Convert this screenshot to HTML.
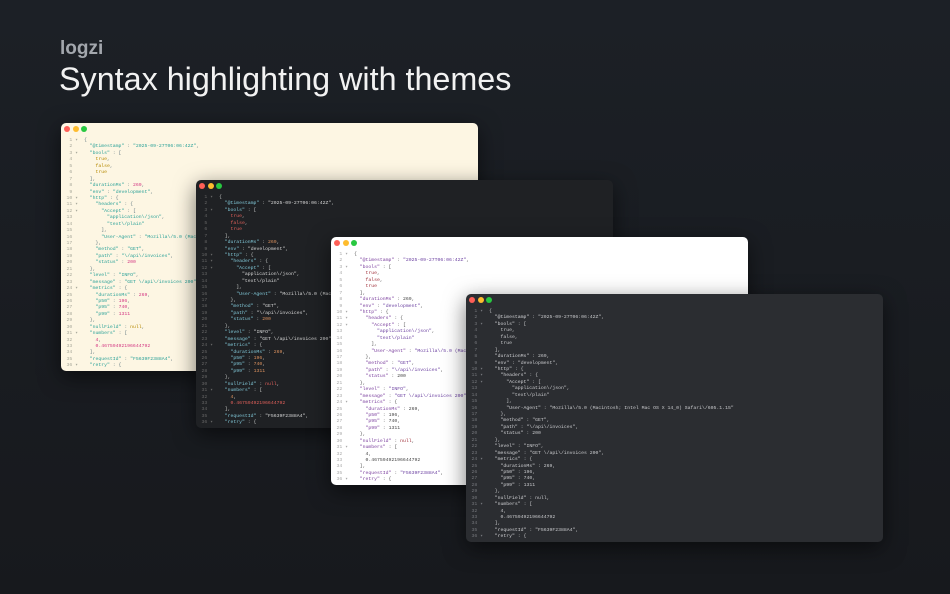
<!DOCTYPE html>
<html><head><meta charset="utf-8"><style>
*{margin:0;padding:0;box-sizing:border-box}
body{width:950px;height:594px;overflow:hidden;background:linear-gradient(180deg,#1c2026 0%,#17191d 100%);font-family:"Liberation Sans",sans-serif;position:relative}
.brand{position:absolute;left:60px;top:38px;color:#a3a7ad;font-size:19px;font-weight:bold}
.title{position:absolute;left:59px;top:61px;color:#f2f2f2;font-size:32.3px;font-weight:normal}
.win{position:absolute;width:417px;height:248px;border-radius:5px;overflow:hidden;box-shadow:0 6px 22px rgba(0,0,0,.55)}
.dot{position:absolute;top:3px;width:6px;height:6px;border-radius:50%}
.d1{left:3px;background:#fe5f57}.d2{left:11.5px;background:#febc2e}.d3{left:20px;background:#28c840}
.code{position:absolute;left:0;top:15px;font-family:"Liberation Mono",monospace;font-size:4.8px;line-height:6.43px;white-space:pre}
.ln{position:absolute;left:0;width:17px;text-align:right}
.tx{position:absolute;left:23px}
.w1{left:61px;top:123px;background:#fdf6e3}
.w1 .ln{color:#a9a99b}.w1 .tx{color:#657b83}.w1 .k{color:#2aa198}.w1 .s{color:#2aa198}.w1 .b{color:#b58900}.w1 .n{color:#d33682}
.w2{left:196px;top:180px;background:#1f2124}
.w2 .ln{color:#666}.w2 .tx{color:#c5c8c6}.w2 .k{color:#81c8d8}.w2 .s{color:#d6d6d6}.w2 .b{color:#e0605a}.w2 .n{color:#de935f}
.w3{left:331px;top:237px;background:#ffffff}
.w3 .ln{color:#aaa}.w3 .tx{color:#555}.w3 .k{color:#7a3e9d}.w3 .s{color:#6a3fa0}.w3 .b{color:#a0303a}.w3 .n{color:#444}
.w4{left:466px;top:294px;background:#2b2d31}
.w4 .ln{color:#75777c}.w4 .tx{color:#c8c9cc}.w4 .k{color:#d0d1d4}.w4 .s{color:#c8c9cc}.w4 .b{color:#c8c9cc}.w4 .n{color:#c8c9cc}
</style></head><body>
<div class="brand">logzi</div>
<div class="title">Syntax highlighting with themes</div>

<div class="win w1"><div class="dot d1"></div><div class="dot d2"></div><div class="dot d3"></div><div class="code"><div class="ln">1 ▾
2  
3 ▾
4  
5  
6  
7  
8  
9  
10 ▾
11 ▾
12 ▾
13  
14  
15  
16  
17  
18  
19  
20  
21  
22  
23  
24 ▾
25  
26  
27  
28  
29  
30  
31 ▾
32  
33  
34  
35  
36 ▾</div><div class="tx">{
  <span class="k">"@timestamp"</span> : <span class="s">"2025-09-27T06:06:42Z"</span>,
  <span class="k">"bools"</span> : [
    <span class="b">true</span>,
    <span class="b">false</span>,
    <span class="b">true</span>
  ],
  <span class="k">"durationMs"</span> : <span class="n">269</span>,
  <span class="k">"env"</span> : <span class="s">"development"</span>,
  <span class="k">"http"</span> : {
    <span class="k">"headers"</span> : {
      <span class="k">"Accept"</span> : [
        <span class="s">"application\/json"</span>,
        <span class="s">"text\/plain"</span>
      ],
      <span class="k">"User-Agent"</span> : <span class="s">"Mozilla\/5.0 (Macintosh; Intel Mac OS X 14_0) Safari\/605.1.15"</span>
    },
    <span class="k">"method"</span> : <span class="s">"GET"</span>,
    <span class="k">"path"</span> : <span class="s">"\/api\/invoices"</span>,
    <span class="k">"status"</span> : <span class="n">200</span>
  },
  <span class="k">"level"</span> : <span class="s">"INFO"</span>,
  <span class="k">"message"</span> : <span class="s">"GET \/api\/invoices 200"</span>,
  <span class="k">"metrics"</span> : {
    <span class="k">"durationMs"</span> : <span class="n">269</span>,
    <span class="k">"p50"</span> : <span class="n">196</span>,
    <span class="k">"p95"</span> : <span class="n">740</span>,
    <span class="k">"p99"</span> : <span class="n">1311</span>
  },
  <span class="k">"nullField"</span> : <span class="b">null</span>,
  <span class="k">"numbers"</span> : [
    <span class="n">4</span>,
    <span class="n">0.46759492196644792</span>
  ],
  <span class="k">"requestId"</span> : <span class="s">"F5639F2388A4"</span>,
  <span class="k">"retry"</span> : {</div></div></div>

<div class="win w2"><div class="dot d1"></div><div class="dot d2"></div><div class="dot d3"></div><div class="code"><div class="ln">1 ▾
2  
3 ▾
4  
5  
6  
7  
8  
9  
10 ▾
11 ▾
12 ▾
13  
14  
15  
16  
17  
18  
19  
20  
21  
22  
23  
24 ▾
25  
26  
27  
28  
29  
30  
31 ▾
32  
33  
34  
35  
36 ▾</div><div class="tx">{
  <span class="k">"@timestamp"</span> : <span class="s">"2025-09-27T06:06:42Z"</span>,
  <span class="k">"bools"</span> : [
    <span class="b">true</span>,
    <span class="b">false</span>,
    <span class="b">true</span>
  ],
  <span class="k">"durationMs"</span> : <span class="n">269</span>,
  <span class="k">"env"</span> : <span class="s">"development"</span>,
  <span class="k">"http"</span> : {
    <span class="k">"headers"</span> : {
      <span class="k">"Accept"</span> : [
        <span class="s">"application\/json"</span>,
        <span class="s">"text\/plain"</span>
      ],
      <span class="k">"User-Agent"</span> : <span class="s">"Mozilla\/5.0 (Macintosh; Intel Mac OS X 14_0) Safari\/605.1.15"</span>
    },
    <span class="k">"method"</span> : <span class="s">"GET"</span>,
    <span class="k">"path"</span> : <span class="s">"\/api\/invoices"</span>,
    <span class="k">"status"</span> : <span class="n">200</span>
  },
  <span class="k">"level"</span> : <span class="s">"INFO"</span>,
  <span class="k">"message"</span> : <span class="s">"GET \/api\/invoices 200"</span>,
  <span class="k">"metrics"</span> : {
    <span class="k">"durationMs"</span> : <span class="n">269</span>,
    <span class="k">"p50"</span> : <span class="n">196</span>,
    <span class="k">"p95"</span> : <span class="n">740</span>,
    <span class="k">"p99"</span> : <span class="n">1311</span>
  },
  <span class="k">"nullField"</span> : <span class="b">null</span>,
  <span class="k">"numbers"</span> : [
    <span class="n">4</span>,
    <span class="b">0.46759492196644792</span>
  ],
  <span class="k">"requestId"</span> : <span class="s">"F5639F2388A4"</span>,
  <span class="k">"retry"</span> : {</div></div></div>

<div class="win w3"><div class="dot d1"></div><div class="dot d2"></div><div class="dot d3"></div><div class="code"><div class="ln">1 ▾
2  
3 ▾
4  
5  
6  
7  
8  
9  
10 ▾
11 ▾
12 ▾
13  
14  
15  
16  
17  
18  
19  
20  
21  
22  
23  
24 ▾
25  
26  
27  
28  
29  
30  
31 ▾
32  
33  
34  
35  
36 ▾</div><div class="tx">{
  <span class="k">"@timestamp"</span> : <span class="s">"2025-09-27T06:06:42Z"</span>,
  <span class="k">"bools"</span> : [
    <span class="b">true</span>,
    <span class="b">false</span>,
    <span class="b">true</span>
  ],
  <span class="k">"durationMs"</span> : <span class="n">269</span>,
  <span class="k">"env"</span> : <span class="s">"development"</span>,
  <span class="k">"http"</span> : {
    <span class="k">"headers"</span> : {
      <span class="k">"Accept"</span> : [
        <span class="s">"application\/json"</span>,
        <span class="s">"text\/plain"</span>
      ],
      <span class="k">"User-Agent"</span> : <span class="s">"Mozilla\/5.0 (Macintosh; Intel Mac OS X 14_0) Safari\/605.1.15"</span>
    },
    <span class="k">"method"</span> : <span class="s">"GET"</span>,
    <span class="k">"path"</span> : <span class="s">"\/api\/invoices"</span>,
    <span class="k">"status"</span> : <span class="n">200</span>
  },
  <span class="k">"level"</span> : <span class="s">"INFO"</span>,
  <span class="k">"message"</span> : <span class="s">"GET \/api\/invoices 200"</span>,
  <span class="k">"metrics"</span> : {
    <span class="k">"durationMs"</span> : <span class="n">269</span>,
    <span class="k">"p50"</span> : <span class="n">196</span>,
    <span class="k">"p95"</span> : <span class="n">740</span>,
    <span class="k">"p99"</span> : <span class="n">1311</span>
  },
  <span class="k">"nullField"</span> : <span class="b">null</span>,
  <span class="k">"numbers"</span> : [
    <span class="n">4</span>,
    <span class="n">0.46759492196644792</span>
  ],
  <span class="k">"requestId"</span> : <span class="s">"F5639F2388A4"</span>,
  <span class="k">"retry"</span> : {</div></div></div>

<div class="win w4"><div class="dot d1"></div><div class="dot d2"></div><div class="dot d3"></div><div class="code"><div class="ln">1 ▾
2  
3 ▾
4  
5  
6  
7  
8  
9  
10 ▾
11 ▾
12 ▾
13  
14  
15  
16  
17  
18  
19  
20  
21  
22  
23  
24 ▾
25  
26  
27  
28  
29  
30  
31 ▾
32  
33  
34  
35  
36 ▾</div><div class="tx">{
  <span class="k">"@timestamp"</span> : <span class="s">"2025-09-27T06:06:42Z"</span>,
  <span class="k">"bools"</span> : [
    <span class="b">true</span>,
    <span class="b">false</span>,
    <span class="b">true</span>
  ],
  <span class="k">"durationMs"</span> : <span class="n">269</span>,
  <span class="k">"env"</span> : <span class="s">"development"</span>,
  <span class="k">"http"</span> : {
    <span class="k">"headers"</span> : {
      <span class="k">"Accept"</span> : [
        <span class="s">"application\/json"</span>,
        <span class="s">"text\/plain"</span>
      ],
      <span class="k">"User-Agent"</span> : <span class="s">"Mozilla\/5.0 (Macintosh; Intel Mac OS X 14_0) Safari\/605.1.15"</span>
    },
    <span class="k">"method"</span> : <span class="s">"GET"</span>,
    <span class="k">"path"</span> : <span class="s">"\/api\/invoices"</span>,
    <span class="k">"status"</span> : <span class="n">200</span>
  },
  <span class="k">"level"</span> : <span class="s">"INFO"</span>,
  <span class="k">"message"</span> : <span class="s">"GET \/api\/invoices 200"</span>,
  <span class="k">"metrics"</span> : {
    <span class="k">"durationMs"</span> : <span class="n">269</span>,
    <span class="k">"p50"</span> : <span class="n">196</span>,
    <span class="k">"p95"</span> : <span class="n">740</span>,
    <span class="k">"p99"</span> : <span class="n">1311</span>
  },
  <span class="k">"nullField"</span> : <span class="b">null</span>,
  <span class="k">"numbers"</span> : [
    <span class="n">4</span>,
    <span class="n">0.46759492196644792</span>
  ],
  <span class="k">"requestId"</span> : <span class="s">"F5639F2388A4"</span>,
  <span class="k">"retry"</span> : {</div></div></div>
</body></html>
